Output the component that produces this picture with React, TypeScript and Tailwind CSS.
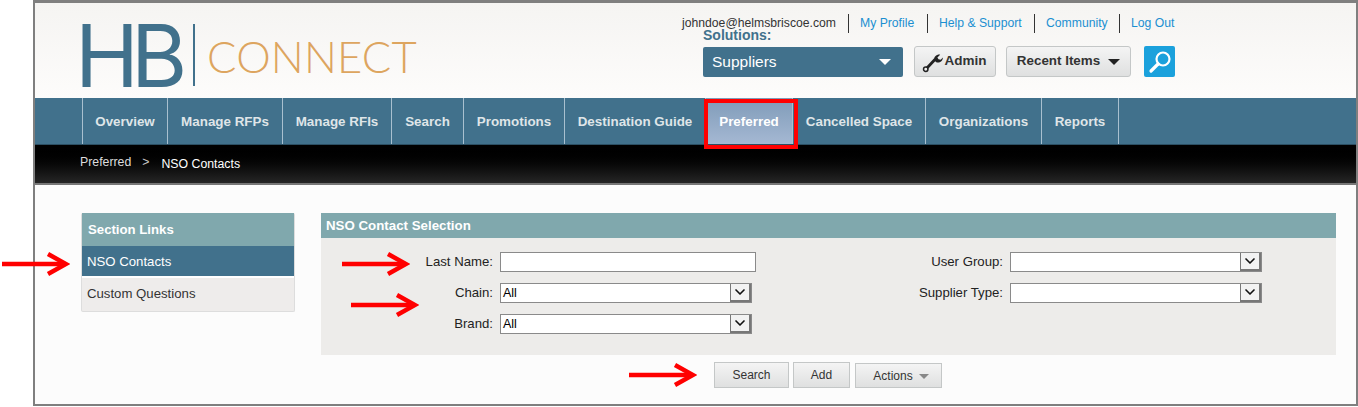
import { ChevronDown } from "lucide-react";

const navItems = [
  { label: "Overview", width: "w-[85px]" },
  { label: "Manage RFPs", width: "w-[115px]" },
  { label: "Manage RFIs", width: "w-[109px]" },
  { label: "Search", width: "w-[72px]" },
  { label: "Promotions", width: "w-[101px]" },
  { label: "Destination Guide", width: "w-[141px]" },
  { label: "Preferred", width: "w-[87px]", active: true },
  { label: "Cancelled Space", width: "w-[133px]" },
  { label: "Organizations", width: "w-[116px]" },
  { label: "Reports", width: "w-[78px]" },
];

function Arrow({ className }: { className: string }) {
  return (
    <svg className={`absolute ${className}`} width="68" height="24" viewBox="0 0 68 24" fill="none">
      <path d="M0 12H62" stroke="#ff0000" strokeWidth="4.5" />
      <path d="M46 2L64 12L46 22" stroke="#ff0000" strokeWidth="4.5" />
    </svg>
  );
}

function FakeSelect({ value, width }: { value?: string; width: string }) {
  return (
    <div className={`flex h-[20px] items-stretch border border-[#8a8a8a] bg-white ${width}`}>
      <div className="flex-1 pl-[2px] text-[12.5px] leading-[18px] text-black">{value}</div>
      <div className="flex w-[21px] items-center justify-center border-l border-[#777] border-b-2 border-r-2 bg-[#f2f2f2]">
        <ChevronDown size={16} strokeWidth={2.5} color="#111" />
      </div>
    </div>
  );
}

function Label({ children }: { children: string }) {
  return <div className="text-right text-[13.2px] leading-[20px] text-[#222]">{children}</div>;
}

function GrayButton({ children, className }: { children: React.ReactNode; className: string }) {
  return (
    <button
      type="button"
      className={`flex items-center justify-center border border-[#c4c7c7] bg-gradient-to-b from-[#f4f4f4] to-[#dfe0e0] text-[12px] text-[#333] ${className}`}
    >
      {children}
    </button>
  );
}

export default function App() {
  return (
    <div className="relative h-[407px] w-[1358px] overflow-hidden bg-white font-['Liberation_Sans',Arial,sans-serif]">
      <div className="ml-[33px] h-[406px] w-[1325px] border-2 border-t-[3px] border-[#7f7f7f] bg-[#fcfcfc]">
        {/* Header */}
        <div className="flex h-[95px] bg-gradient-to-b from-[#f5f4f2] to-[#fdfcfb]">
          <div className="ml-[46px] mt-[21px] flex h-[64px] w-[377px] items-start">
            <div className="ml-[-6px] w-[118px] text-[86px] font-normal leading-[64px] tracking-[-8px] text-[#41718c] font-['Inter',sans-serif]">
              HB
            </div>
            <div className="h-[62px] w-[2px] bg-[#41718c]" />
            <div className="ml-[12px] mt-[10px] text-[43.6px] font-light leading-[44px] tracking-[0.2px] text-[#dda55f] font-['Lato',sans-serif]">
              CONNECT
            </div>
          </div>
          <div className="ml-[224px] flex w-[500px] flex-col">
            <div className="mt-[11px] flex h-[19px] items-center text-[12.2px]">
              <span className="w-[166px] text-[#333]">johndoe@helmsbriscoe.com</span>
              <span className="flex h-[19px] w-[79px] items-center border-l border-[#333] pl-[11px] text-[#1b8fd1]">My Profile</span>
              <span className="flex h-[19px] w-[107px] items-center border-l border-[#333] pl-[11px] text-[#1b8fd1]">Help &amp; Support</span>
              <span className="flex h-[19px] w-[85px] items-center border-l border-[#333] pl-[11px] text-[#1b8fd1]">Community</span>
              <span className="flex h-[19px] items-center border-l border-[#333] pl-[11px] text-[#1b8fd1]">Log Out</span>
            </div>
            <div className="ml-[21px] mt-[-6px] flex flex-col">
              <div className="text-[14px] font-bold leading-[17px] text-[#41718c]">Solutions:</div>
              <div className="mt-[2px] flex items-start">
                <div className="mt-[1px] flex h-[30px] w-[200px] items-center justify-between rounded-[2px] bg-[#41718c] pl-[9px] pr-[12px] text-[15.5px] text-white">
                  Suppliers
                  <span className="h-0 w-0 border-x-[6.5px] border-t-[6px] border-x-transparent border-t-white" />
                </div>
                <GrayButton className="ml-[11px] h-[31px] w-[82px] gap-[1px] rounded-[3px] pr-[2px] font-bold !text-[13.5px]">
                  <svg width="22" height="22" viewBox="0 0 20 20" fill="none">
                    <path d="M3 17L12 7.5" stroke="#222" strokeWidth="2.6" />
                    <circle cx="3.4" cy="16.6" r="2" stroke="#222" strokeWidth="1.4" fill="#eee" />
                    <path d="M11 8.5C10.6 5.5 13 3 16.5 3.3L14 5.8L15 7.6L17 8L19 5.8C19 9 16 11 13 10.2Z" fill="#222" />
                  </svg>
                  Admin
                </GrayButton>
                <GrayButton className="ml-[10px] h-[31px] w-[125px] gap-[8px] rounded-[3px] font-bold !text-[13.4px]">
                  Recent Items
                  <span className="h-0 w-0 border-x-[6px] border-t-[6px] border-x-transparent border-t-[#222]" />
                </GrayButton>
                <div className="ml-[13px] flex h-[31px] w-[31px] items-center justify-center rounded-[2px] bg-[#1ba1dc]">
                  <svg width="26" height="26" viewBox="0 0 26 26" fill="none">
                    <circle cx="16" cy="10" r="6.5" stroke="#fff" strokeWidth="2.2" />
                    <path d="M11 15L4 22" stroke="#fff" strokeWidth="3.2" strokeLinecap="round" />
                  </svg>
                </div>
              </div>
            </div>
          </div>
        </div>

        {/* Main nav */}
        <div className="flex h-[47px] border-b border-[#2c4f63] bg-[#41718c] pl-[47px]">
          {navItems.map((item) => (
            <div
              key={item.label}
              className={`flex items-center justify-center border-l border-[#a9c0cf] pt-[2px] text-[13.4px] font-bold last:border-r ${item.width} ${
                item.active ? "bg-gradient-to-b from-[#7f9bb8] to-[#a5b8d3] text-white" : "text-[#dfe5e8]"
              }`}
            >
              {item.label}
            </div>
          ))}
        </div>

        {/* Breadcrumb */}
        <div className="flex h-[40px] items-center border-b-2 border-[#777] bg-gradient-to-b from-[#000] to-[#262626] pl-[45px] text-[12.3px]">
          <span className="mt-[-3px] text-[#ddd]">Preferred</span>
          <span className="ml-[11px] mr-[12px] mt-[-3px] text-[#ccc]">&gt;</span>
          <span className="text-white">NSO Contacts</span>
        </div>

        {/* Content */}
        <div className="flex pl-[46px] pr-[20px] pt-[28px]">
          <div className="h-[99px] w-[214px] rounded-[2px] border-b border-x border-[#ddd] bg-[#eeeceb] text-[13.2px]">
            <div className="flex h-[33px] items-center bg-[#80a8ad] pl-[6px] pt-[1px] text-[13.2px] font-bold text-white">Section Links</div>
            <div className="flex h-[32px] items-center border-b-2 border-white bg-[#41718c] pl-[5px] pt-[1px] text-white">NSO Contacts</div>
            <div className="flex h-[31px] items-center pl-[5px] pt-[1px] text-[#333]">Custom Questions</div>
          </div>

          <div className="ml-[26px] flex-1">
            <div className="flex h-[25px] items-center bg-[#80a8ad] pl-[5px] text-[13.3px] font-bold text-white">NSO Contact Selection</div>
            <div className="flex h-[117px] items-start bg-[#edecea] pl-[70px] pt-[14px]">
              <div className="grid w-[365px] grid-cols-[102px_1fr] gap-x-[7px] gap-y-[11px]">
                <Label>Last Name:</Label>
                <input className="h-[20px] w-[256px] border border-[#8a8a8a] bg-white" />
                <Label>Chain:</Label>
                <FakeSelect value="All" width="w-[252px]" />
                <Label>Brand:</Label>
                <FakeSelect value="All" width="w-[252px]" />
              </div>
              <div className="ml-[137px] grid grid-cols-[110px_252px] gap-x-[7px] gap-y-[11px]">
                <Label>User Group:</Label>
                <FakeSelect width="w-[252px]" />
                <Label>Supplier Type:</Label>
                <FakeSelect width="w-[252px]" />
              </div>
            </div>
            <div className="ml-[393px] mt-[7px] flex items-start gap-[4px]">
              <GrayButton className="h-[26px] w-[75px]">Search</GrayButton>
              <GrayButton className="h-[26px] w-[57px]">Add</GrayButton>
              <GrayButton className="ml-[1px] mt-[1px] h-[25px] w-[87px] gap-[6px] pl-[5px]">
                Actions
                <span className="mt-[2px] h-0 w-0 border-x-[5.5px] border-t-[5px] border-x-transparent border-t-[#888]" />
              </GrayButton>
            </div>
          </div>
        </div>
      </div>

      {/* Annotations */}
      <div className="absolute left-[704px] top-[99px] h-[50px] w-[94px] border-4 border-[#ff0000]" />
      <Arrow className="left-[2px] top-[252px]" />
      <Arrow className="left-[342px] top-[252px]" />
      <Arrow className="left-[351px] top-[293px]" />
      <Arrow className="left-[629px] top-[363px]" />
    </div>
  );
}
